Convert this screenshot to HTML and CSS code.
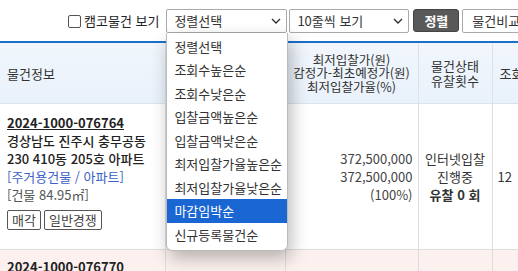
FILE: index.html
```html
<!DOCTYPE html>
<html lang="ko">
<head>
    <meta charset="UTF-8">
    <meta name="viewport" content="width=device-width, initial-scale=1.0">
    <title>물건목록</title>
    <link rel="stylesheet" href="styles.css">
</head>
<body>
    <div class="toolbar">
        <label class="check"><span class="box"></span>캠코물건 보기</label>
        <div class="select sort-select">
            <span>정렬선택</span>
            <svg width="10" height="6" viewBox="0 0 10 6"><path d="M1 1l4 4 4-4" fill="none" stroke="#333" stroke-width="1.4"/></svg>
            <ul class="options">
                <li>정렬선택</li>
                <li>조회수높은순</li>
                <li>조회수낮은순</li>
                <li>입찰금액높은순</li>
                <li>입찰금액낮은순</li>
                <li>최저입찰가율높은순</li>
                <li>최저입찰가율낮은순</li>
                <li class="active">마감임박순</li>
                <li>신규등록물건순</li>
            </ul>
        </div>
        <div class="select rows-select">
            <span>10줄씩 보기</span>
            <svg width="10" height="6" viewBox="0 0 10 6"><path d="M1 1l4 4 4-4" fill="none" stroke="#333" stroke-width="1.4"/></svg>
        </div>
        <button class="btn-dark">정렬</button>
        <button class="btn-light">물건비교</button>
    </div>

    <table class="list">
        <colgroup>
            <col style="width:165px">
            <col style="width:120px">
            <col style="width:133px">
            <col style="width:74px">
            <col style="width:80px">
        </colgroup>
        <thead>
            <tr>
                <th class="left">물건정보</th>
                <th class="period">입찰기간</th>
                <th class="tight">최저입찰가(원)<br>감정가-최초예정가(원)<br>최저입찰가율(%)</th>
                <th>물건상태<br>유찰횟수</th>
                <th class="left">조회수</th>
            </tr>
        </thead>
        <tbody>
            <tr>
                <td class="info">
                    <a class="no">2024-1000-076764</a>
                    <div class="addr">경상남도 진주시 충무공동<br>230 410동 205호 아파트</div>
                    <div class="kind">[주거용건물 / 아파트]</div>
                    <div class="area">[건물 84.95㎡]</div>
                    <div class="tags"><span>매각</span><span>일반경쟁</span></div>
                </td>
                <td class="period"></td>
                <td class="price">372,500,000<br>372,500,000<br>(100%)</td>
                <td class="state">인터넷입찰<br>진행중<br><b>유찰 0 회</b></td>
                <td class="views">12</td>
            </tr>
            <tr class="alt">
                <td class="info"><a class="no">2024-1000-076770</a></td>
                <td></td>
                <td></td>
                <td></td>
                <td></td>
            </tr>
        </tbody>
    </table>
</body>
</html>
```

FILE: styles.css
```css
body {
    margin: 0;
    font-family: 'Noto Sans CJK KR', 'Noto Sans', sans-serif;
    font-size: 13px;
    color: #333;
    background: #fff;
    overflow: hidden;
    width: 518px;
    height: 271px;
}
.toolbar {
    display: flex;
    align-items: center;
    height: 41px;
    padding-left: 68px;
    white-space: nowrap;
}
.toolbar > * {
    flex-shrink: 0;
}
.check {
    display: flex;
    align-items: center;
    gap: 3px;
    margin-right: 7px;
    font-size: 13px;
    color: #222;
}
.check .box {
    width: 11px;
    height: 11px;
    border: 1px solid #555;
    border-radius: 2px;
    margin-top: 2px;
}
.select {
    position: relative;
    display: flex;
    align-items: center;
    justify-content: space-between;
    box-sizing: border-box;
    height: 24px;
    padding: 0 5px 0 7px;
    border: 1px solid #a9a9a9;
    border-radius: 2px;
    color: #333;
    background: #fff;
}
.sort-select {
    width: 121px;
    margin-right: 2px;
}
.rows-select {
    width: 120px;
    margin-right: 4px;
}
.options {
    position: absolute;
    left: -1px;
    top: 23px;
    width: 120px;
    margin: 0;
    padding: 2px 0 4px;
    list-style: none;
    background: #fff;
    border: 1px solid #bbb;
    border-top: none;
    border-radius: 0 0 6px 6px;
    box-shadow: 3px 7px 18px rgba(0, 0, 0, 0.28);
    z-index: 5;
}
.options li {
    height: 23.5px;
    line-height: 23.5px;
    padding-left: 7px;
    color: #333;
}
.options li.active {
    background: #1a66d3;
    color: #fff;
}
.btn-dark {
    height: 23px;
    padding: 0 10px;
    margin-right: 3px;
    border: 1px solid #444;
    border-radius: 3px;
    background: #595959;
    color: #fff;
    font-family: inherit;
    font-size: 13px;
    font-weight: bold;
}
.btn-light {
    height: 24px;
    padding: 0 9px;
    border: 1px solid #aaa;
    border-radius: 2px;
    background: #fff;
    color: #333;
    font-family: inherit;
    font-size: 13px;
}
.list {
    border-collapse: collapse;
    table-layout: fixed;
    width: 572px;
    border-top: 2px solid #1b6fc9;
}
.list th {
    height: 60px;
    padding: 0;
    background: linear-gradient(#f1f6fc, #e9f1fb);
    font-weight: normal;
    font-size: 13px;
    line-height: 15px;
    color: #333;
    border-left: 1px solid #dde2ea;
    border-bottom: 1px solid #dde2ea;
    text-align: center;
}
.list th.tight {
    font-size: 12.5px;
    line-height: 13.5px;
}
.list th.left {
    text-align: left;
    padding-left: 7px;
}
.list th:first-child {
    border-left: none;
}
.list td {
    border-left: 1px solid #ddd;
    border-bottom: 1px solid #ddd;
    vertical-align: middle;
    line-height: 18px;
}
.list td:first-child {
    border-left: none;
}
.info {
    height: 146px;
    padding: 0 0 0 7px;
}
.list td.info {
    vertical-align: top;
    padding-top: 10px;
    box-sizing: border-box;
}
.no {
    display: block;
    font-weight: bold;
    text-decoration: underline;
    color: #222;
}
.addr {
    font-weight: 500;
    color: #222;
}
.kind {
    color: #3b5fc8;
}
.area {
    color: #555;
}
.tags {
    display: flex;
    gap: 3px;
    margin-top: 6px;
}
.tags span {
    border: 1px solid #555;
    border-radius: 2px;
    padding: 0 4px;
    line-height: 18px;
    color: #444;
}
.price {
    text-align: right;
    padding-right: 5px;
    color: #444;
}
.state {
    text-align: center;
    color: #333;
}
.views {
    padding-left: 5px;
}
.alt td {
    background: #fcf1ee;
    height: 40px;
    vertical-align: top;
}
.list .alt td.info {
    padding-top: 8px;
}
```
